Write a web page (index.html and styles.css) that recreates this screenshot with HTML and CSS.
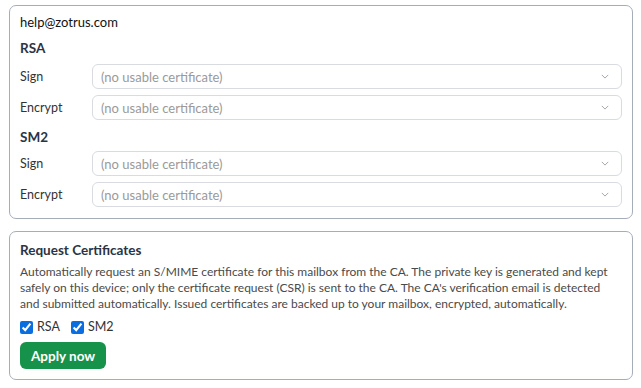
FILE: index.html
```html
<!DOCTYPE html>
<html lang="en">
<head>
    <meta charset="UTF-8">
    <meta name="viewport" content="width=device-width, initial-scale=1.0">
    <title>Certificates</title>
    <link rel="stylesheet" href="styles.css">
</head>
<body>
    <!-- 当前邮箱证书 -->
    <div class="card">
        <div class="email">help@zotrus.com</div>

        <div class="algo">RSA</div>
        <div class="row">
            <div class="label">Sign</div>
            <div class="select">
                <span>(no usable certificate)</span>
                <svg class="chevron" viewBox="0 0 10 6"><path d="M1 1l4 4 4-4"/></svg>
            </div>
        </div>
        <div class="row">
            <div class="label">Encrypt</div>
            <div class="select">
                <span>(no usable certificate)</span>
                <svg class="chevron" viewBox="0 0 10 6"><path d="M1 1l4 4 4-4"/></svg>
            </div>
        </div>

        <div class="algo algo-sm2">SM2</div>
        <div class="row">
            <div class="label">Sign</div>
            <div class="select">
                <span>(no usable certificate)</span>
                <svg class="chevron" viewBox="0 0 10 6"><path d="M1 1l4 4 4-4"/></svg>
            </div>
        </div>
        <div class="row">
            <div class="label">Encrypt</div>
            <div class="select">
                <span>(no usable certificate)</span>
                <svg class="chevron" viewBox="0 0 10 6"><path d="M1 1l4 4 4-4"/></svg>
            </div>
        </div>
    </div>

    <!-- 申请证书 -->
    <div class="card card-request">
        <div class="title">Request Certificates</div>
        <p class="desc">Automatically request an S/MIME certificate for this mailbox from the CA. The private key is generated and kept safely on this device; only the certificate request (CSR) is sent to the CA. The CA's verification email is detected and submitted automatically. Issued certificates are backed up to your mailbox, encrypted, automatically.</p>
        <div class="checks">
            <label class="check"><input type="checkbox" checked> RSA</label>
            <label class="check"><input type="checkbox" checked> SM2</label>
        </div>
        <button class="apply-btn">Apply now</button>
    </div>
</body>
</html>
```

FILE: styles.css
```css
* {
    margin: 0;
    padding: 0;
    box-sizing: border-box;
}

body {
    padding: 5px 8px 0 9px;
    font-family: Lato, "Noto Sans", sans-serif;
    font-size: 13px;
    color: #222;
    background: #fff;
}

/* 卡片 */
.card {
    border: 1px solid #a7adb8;
    border-radius: 7px;
    padding: 7px 10px 11px;
}

.card-request {
    margin-top: 12px;
    padding: 9px 10px 10px;
}

.email {
    line-height: 18px;
    font-size: 13px;
    color: #111;
}

.algo {
    margin: 8px 0 7px;
    line-height: 18px;
    font-size: 13.5px;
    font-weight: 700;
    color: #2b3444;
}

.algo-sm2 {
    margin-bottom: 5px;
}

/* 选择行 */
.row {
    display: flex;
    align-items: center;
}

.row + .row {
    margin-top: 6px;
}

.label {
    width: 72px;
    font-size: 12.5px;
    color: #333;
}

.select {
    flex: 1;
    height: 25px;
    display: flex;
    align-items: center;
    justify-content: space-between;
    padding: 0 12px 0 8px;
    border: 1px solid #d8dbe0;
    border-radius: 6px;
    font-size: 13px;
    color: #9a9a9a;
}

.chevron {
    width: 8px;
    height: 5px;
    fill: none;
    stroke: #a3a3a3;
    stroke-width: 1.2;
}

/* 申请区 */
.title {
    line-height: 18px;
    font-size: 13.5px;
    font-weight: 700;
    color: #2b3444;
}

.desc {
    margin-top: 5px;
    font-size: 12px;
    line-height: 16px;
    color: #4a4a4a;
}

.checks {
    display: flex;
    gap: 11px;
    margin-top: 7px;
    line-height: 16px;
}

.check {
    display: flex;
    align-items: center;
    gap: 4px;
    font-size: 12.5px;
    color: #333;
}

.check input {
    width: 13px;
    height: 13px;
    accent-color: #0b6ee0;
}

.apply-btn {
    margin-top: 7px;
    height: 27px;
    padding: 0 11px;
    border: none;
    border-radius: 6px;
    background: #17924b;
    color: #fff;
    font-family: inherit;
    font-size: 13.5px;
    font-weight: 700;
    cursor: pointer;
}
```
